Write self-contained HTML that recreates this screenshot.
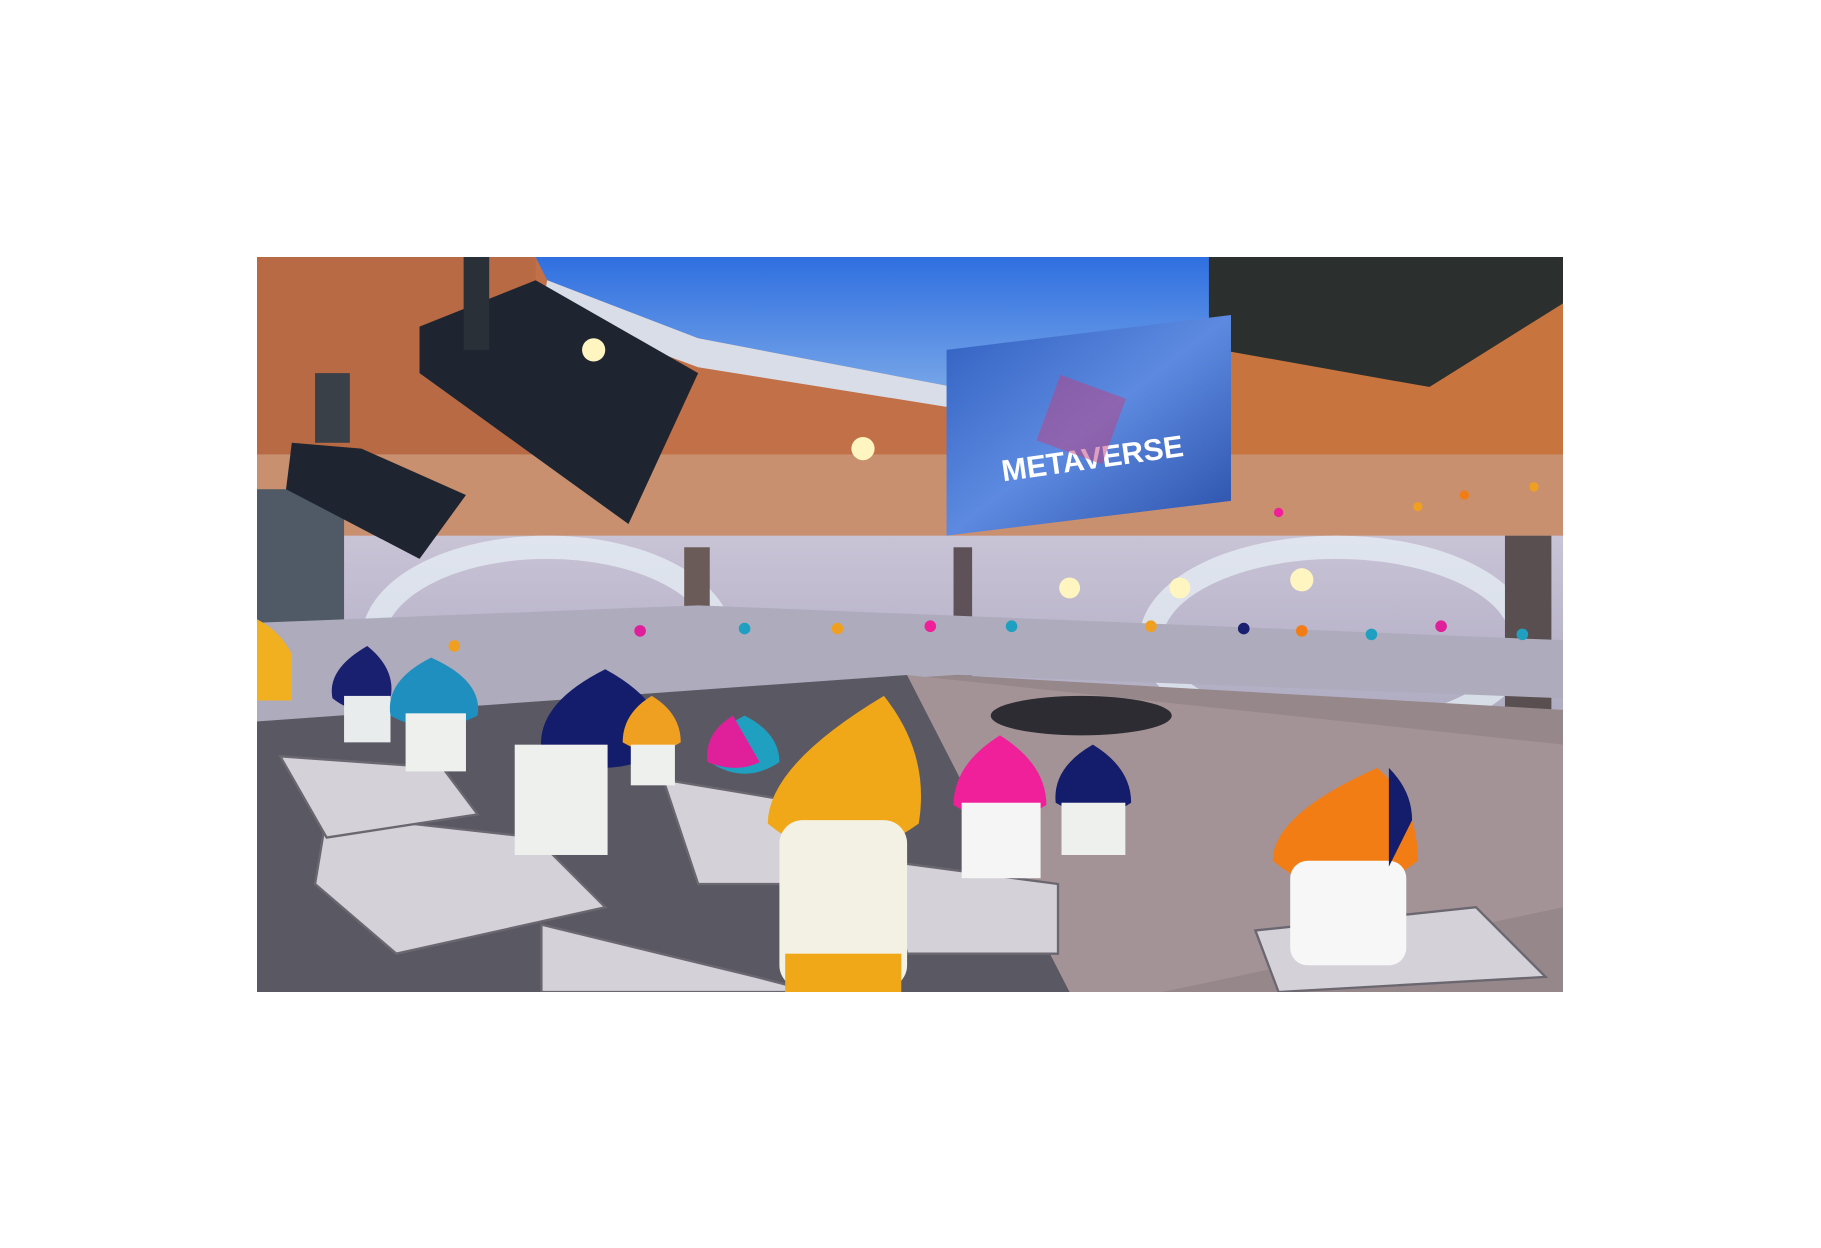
<!DOCTYPE html>
<html><head><meta charset="utf-8"><style>
html,body{margin:0;padding:0;background:#fff;width:1821px;height:1248px;overflow:hidden}
#s{position:absolute;left:257px;top:257px;width:1306px;height:735px}
</style></head><body>
<svg id="s" viewBox="0 0 1125 633" preserveAspectRatio="none">
<defs>
<linearGradient id="sky" x1="0" y1="0" x2="0" y2="1"><stop offset="0" stop-color="#2f6fe0"/><stop offset="1" stop-color="#7aa8e8"/></linearGradient>
<linearGradient id="scr" x1="0" y1="0" x2="1" y2="1"><stop offset="0" stop-color="#2f5fc0"/><stop offset="0.5" stop-color="#5d8ae0"/><stop offset="1" stop-color="#2a4fa8"/></linearGradient>
<linearGradient id="mid" x1="0" y1="0" x2="0" y2="1"><stop offset="0" stop-color="#c9c3d6"/><stop offset="1" stop-color="#a9a6bd"/></linearGradient>
</defs>
<rect width="1125" height="633" fill="#c27048"/>
<polygon points="240,0 830,0 830,120 600,112 380,70 250,20" fill="url(#sky)"/>
<polygon points="250,20 380,70 600,112 600,130 380,95 245,45" fill="#d8dde8"/>
<rect x="0" y="0" width="240" height="200" fill="#b86a44"/>
<polygon points="820,0 1125,0 1125,40 1010,112 820,80" fill="#2b2f2d"/>
<polygon points="830,80 1010,112 1125,40 1125,210 830,230" fill="#c7743f"/>
<rect x="0" y="170" width="1125" height="90" fill="#c99070"/>
<rect x="0" y="240" width="1125" height="190" fill="url(#mid)"/>
<ellipse cx="250" cy="330" rx="150" ry="80" fill="none" stroke="#e8f2f8" stroke-width="20" opacity="0.7"/>
<ellipse cx="930" cy="330" rx="160" ry="80" fill="none" stroke="#e8f2f8" stroke-width="20" opacity="0.7"/>
<rect x="0" y="200" width="75" height="140" fill="#4f5a66"/>
<rect x="368" y="250" width="22" height="180" fill="#6a5a58"/>
<rect x="600" y="250" width="16" height="170" fill="#5e5258"/>
<rect x="1075" y="240" width="40" height="220" fill="#5a4f50"/>
<polygon points="0,315 380,300 1125,330 1125,380 600,360 0,400" fill="#aeabbd"/>
<polygon points="0,400 600,360 1125,390 1125,633 0,633" fill="#96878b"/>
<polygon points="0,400 560,360 700,633 0,633" fill="#5a5963"/>
<polygon points="560,360 1125,420 1125,560 780,633 700,633" fill="#a49396"/>
<ellipse cx="710" cy="395" rx="78" ry="17" fill="#2c2c32"/>
<polygon points="594,80 839,50 839,210 594,240" fill="url(#scr)"/>
<text x="640" y="185" font-family="Liberation Sans,sans-serif" font-weight="bold" font-size="26" fill="#fff" transform="rotate(-8 700 170)">METAVERSE</text>
<rect x="680" y="110" width="60" height="60" fill="#c04080" opacity="0.5" transform="rotate(20 710 140)"/>
<polygon points="140,60 240,20 380,100 320,230 140,100" fill="#1f2530"/>
<rect x="178" y="0" width="22" height="80" fill="#2a3038"/>
<polygon points="30,160 90,165 180,205 140,260 25,200" fill="#1f2530"/>
<rect x="50" y="100" width="30" height="60" fill="#3a4048"/>
<circle cx="290" cy="80" r="10" fill="#fff5c0"/><circle cx="522" cy="165" r="10" fill="#fff5c0"/>
<circle cx="700" cy="285" r="9" fill="#fff5c0"/><circle cx="795" cy="285" r="9" fill="#fff5c0"/><circle cx="900" cy="278" r="10" fill="#fff5c0"/>
<g fill="#d4d2d8" stroke="#6b6770" stroke-width="2">
<polygon points="60,480 240,500 300,560 120,600 50,540"/>
<polygon points="20,430 160,440 190,480 60,500"/>
<polygon points="350,450 470,470 470,540 380,540"/>
<polygon points="540,520 690,540 690,600 560,600"/>
<polygon points="245,575 430,620 480,633 245,633"/>
<polygon points="860,580 1050,560 1110,620 880,633"/>
</g>
<g>
<path d="M0 312 q20 10 30 30 v40 h-30z" fill="#f0b020"/>
<path d="M95 335 q-35 20 -30 45 q25 20 50 0 q5-25 -20-45z" fill="#1a2070"/><rect x="75" y="378" width="40" height="40" fill="#e8ecec"/>
<path d="M150 345 q-40 20 -35 50 q35 20 75 0 q5-30 -40-50z" fill="#1f8fbf"/><rect x="128" y="393" width="52" height="50" fill="#eef0ee"/>
<path d="M300 355 q-60 30 -55 70 q55 30 105 0 q5-40 -50-70z" fill="#141c6c"/><rect x="222" y="420" width="80" height="95" fill="#eef0ee"/>
<path d="M340 378 q-25 15 -25 40 q25 15 50 0 q0-25 -25-40z" fill="#f0a020"/><rect x="322" y="420" width="38" height="35" fill="#eef0ee"/>
<path d="M420 395 q-30 15 -30 40 q30 20 60 0 q0-25 -30-40z" fill="#1fa0c0"/>
<path d="M410 395 q-25 15 -22 40 q25 10 45 0z" fill="#e0209a"/>
<path d="M540 378 q-100 60 -100 110 q60 50 130 0 q10-60 -30-110z" fill="#f0a818"/><rect x="450" y="485" width="110" height="145" rx="20" fill="#f3f1e4"/><rect x="455" y="600" width="100" height="33" fill="#f0a818"/>
<path d="M640 412 q-40 25 -40 60 q40 25 80 0 q0-35 -40-60z" fill="#f0209a"/><rect x="607" y="470" width="68" height="65" fill="#f5f5f5"/>
<path d="M720 420 q-35 20 -32 50 q35 20 65 0 q0-30 -33-50z" fill="#141c6c"/><rect x="693" y="470" width="55" height="45" fill="#eef0ee"/>
<path d="M965 440 q-90 40 -90 80 q60 50 125 0 q0-50 -35-80z" fill="#f27d15"/><rect x="890" y="520" width="100" height="90" rx="15" fill="#f7f7f7"/>
<path d="M975 440 q20 20 20 45 l-20 40z" fill="#141c6c"/>
</g>
<g fill="#f0a020">
<circle cx="170" cy="335" r="5"/><circle cx="330" cy="322" r="5" fill="#e0209a"/><circle cx="420" cy="320" r="5" fill="#1fa0c0"/><circle cx="500" cy="320" r="5"/><circle cx="580" cy="318" r="5" fill="#f0209a"/><circle cx="650" cy="318" r="5" fill="#1fa0c0"/><circle cx="770" cy="318" r="5"/><circle cx="850" cy="320" r="5" fill="#1a2070"/><circle cx="900" cy="322" r="5" fill="#f27d15"/><circle cx="960" cy="325" r="5" fill="#1fa0c0"/><circle cx="1020" cy="318" r="5" fill="#e0209a"/><circle cx="1090" cy="325" r="5" fill="#1fa0c0"/>
<circle cx="880" cy="220" r="4" fill="#f0209a"/><circle cx="1000" cy="215" r="4"/><circle cx="1040" cy="205" r="4" fill="#f27d15"/><circle cx="1100" cy="198" r="4"/>
</g>
</svg>
</body></html>
